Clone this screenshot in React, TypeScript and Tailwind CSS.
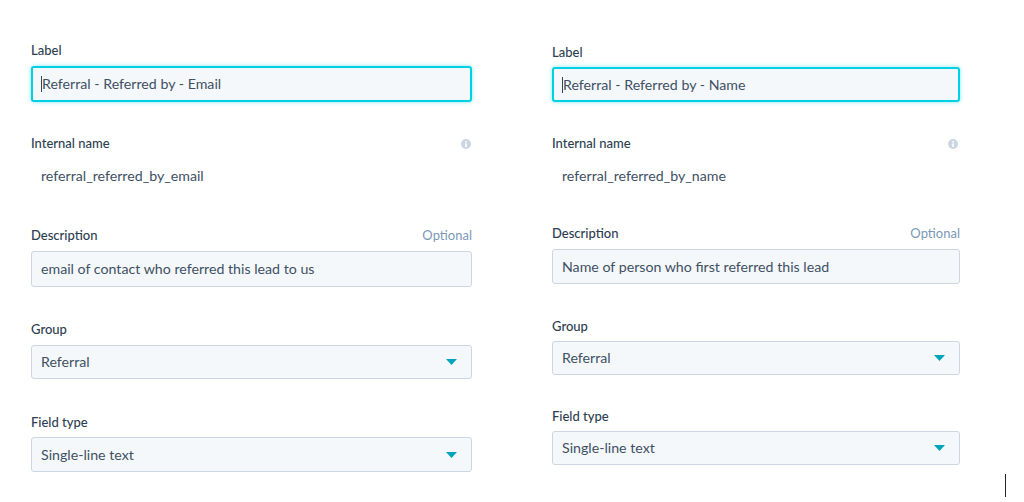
import type { ReactNode } from 'react';

const font = { fontFamily: 'Lato, "Open Sans", "Liberation Sans", sans-serif' };

function Caret() {
  return (
    <svg width="11" height="6" viewBox="0 0 11 6" className="shrink-0">
      <path d="M0 0h11L5.5 6z" fill="#00a4bd" />
    </svg>
  );
}

function InfoIcon() {
  return (
    <svg width="10" height="10" viewBox="0 0 10 10">
      <circle cx="5" cy="5" r="5" fill="#cbd6e2" />
      <circle cx="5" cy="2.8" r="0.9" fill="#fff" />
      <rect x="4.2" y="4.2" width="1.6" height="3.8" rx="0.5" fill="#fff" />
    </svg>
  );
}

function FieldLabel({ children, right, className }: { children: ReactNode; right?: ReactNode; className: string }) {
  return (
    <div className={`flex items-center justify-between h-[18px] text-[13px] font-medium text-[#2d3e50] ${className}`}>
      <span>{children}</span>
      {right}
    </div>
  );
}

function TextBox({ value, focused, className }: { value: string; focused?: boolean; className: string }) {
  return (
    <div
      className={`flex items-center rounded-[3px] bg-[#f5f8fa] text-[14.2px] text-[#3e5064] ${
        focused
          ? 'border-2 border-[#00d0e4] pl-[8px] shadow-[0_0_4px_rgba(0,208,228,0.5)]'
          : 'border border-[#cbd6e2] pl-[9px]'
      } ${className}`}
    >
      {focused && <span className="w-px h-[16px] bg-[#33475b]" />}
      <span>{value}</span>
    </div>
  );
}

function Select({ value, className }: { value: string; className: string }) {
  return (
    <div
      className={`flex items-center justify-between rounded-[3px] border border-[#cbd6e2] bg-[#f5f8fa] pl-[9px] pr-[14px] text-[14.2px] text-[#3e5064] ${className}`}
    >
      <span>{value}</span>
      <Caret />
    </div>
  );
}

const optional = <span className="text-[13px] font-normal text-[#7c98b6]">Optional</span>;

export default function App() {
  return (
    <div className="relative w-[1024px] h-[502px] bg-white overflow-hidden" style={font}>
      <div className="flex pl-[31px] gap-[80px]">
        {/* left property */}
        <div className="w-[441px] flex flex-col">
          <FieldLabel className="mt-[42px]">Label</FieldLabel>
          <TextBox focused value="Referral - Referred by - Email" className="mt-[6px] h-[36px]" />

          <FieldLabel className="mt-[33px]" right={<span className="mr-[1px]"><InfoIcon /></span>}>
            Internal name
          </FieldLabel>
          <div className="mt-[13px] h-[20px] leading-[20px] pl-[10px] text-[14.2px] text-[#3e5064]">
            referral_referred_by_email
          </div>

          <FieldLabel className="mt-[41px]" right={optional}>Description</FieldLabel>
          <TextBox value="email of contact who referred this lead to us" className="mt-[6px] h-[36px]" />

          <FieldLabel className="mt-[34px]">Group</FieldLabel>
          <Select value="Referral" className="mt-[6px] h-[34px]" />

          <FieldLabel className="mt-[35px]">Field type</FieldLabel>
          <Select value="Single-line text" className="mt-[5px] h-[35px]" />
        </div>

        {/* right property */}
        <div className="w-[408px] flex flex-col">
          <FieldLabel className="mt-[44px]">Label</FieldLabel>
          <TextBox focused value="Referral - Referred by - Name" className="mt-[5px] h-[35px]" />

          <FieldLabel className="mt-[33px]" right={<span className="mr-[2px]"><InfoIcon /></span>}>
            Internal name
          </FieldLabel>
          <div className="mt-[13px] h-[20px] leading-[20px] pl-[10px] text-[14.2px] text-[#3e5064]">
            referral_referred_by_name
          </div>

          <FieldLabel className="mt-[39px]" right={optional}>Description</FieldLabel>
          <TextBox value="Name of person who first referred this lead" className="mt-[6px] h-[35px]" />

          <FieldLabel className="mt-[34px]">Group</FieldLabel>
          <Select value="Referral" className="mt-[5px] h-[34px]" />

          <FieldLabel className="mt-[33px]">Field type</FieldLabel>
          <Select value="Single-line text" className="mt-[5px] h-[34px]" />
        </div>
      </div>

      {/* text cursor */}
      <div className="absolute left-[1005px] top-[474px] w-px h-[23px] bg-[#222]" />
    </div>
  );
}
